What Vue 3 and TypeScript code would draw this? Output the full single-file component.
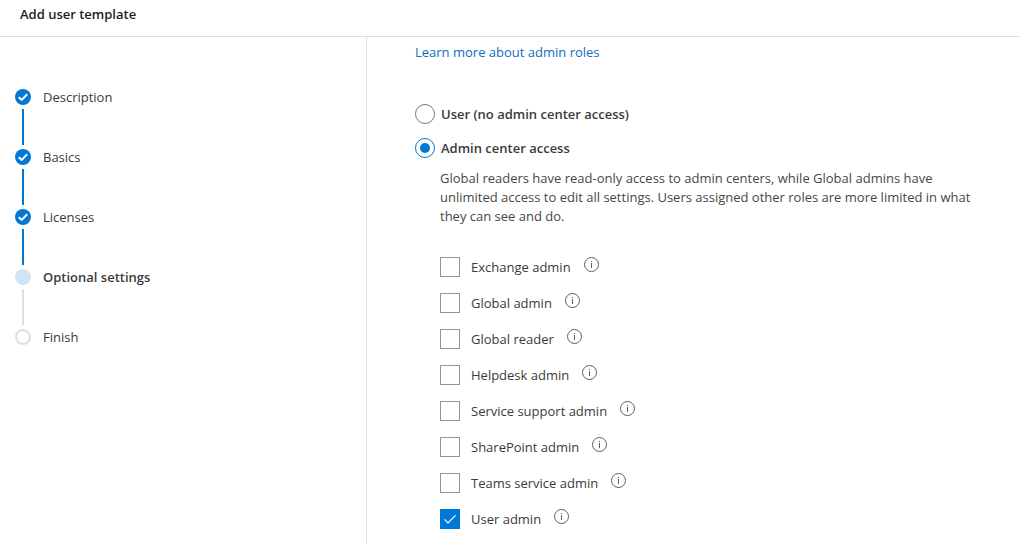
<script setup lang="ts">
import { ref } from 'vue'

type StepState = 'done' | 'current' | 'todo'

interface Step {
  label: string
  state: StepState
}

interface Role {
  id: string
  label: string
}

const steps: Step[] = [
  { label: 'Description', state: 'done' },
  { label: 'Basics', state: 'done' },
  { label: 'Licenses', state: 'done' },
  { label: 'Optional settings', state: 'current' },
  { label: 'Finish', state: 'todo' },
]

const roles: Role[] = [
  { id: 'exchange', label: 'Exchange admin' },
  { id: 'global-admin', label: 'Global admin' },
  { id: 'global-reader', label: 'Global reader' },
  { id: 'helpdesk', label: 'Helpdesk admin' },
  { id: 'service-support', label: 'Service support admin' },
  { id: 'sharepoint', label: 'SharePoint admin' },
  { id: 'teams', label: 'Teams service admin' },
  { id: 'user', label: 'User admin' },
]

const access = ref<'none' | 'admin'>('admin')
const selectedRoles = ref<string[]>(['user'])
</script>

<template>
  <div class="page">
    <header class="header">
      <h1 class="title">Add user template</h1>
    </header>

    <div class="body">
      <nav class="sidebar" aria-label="Progress">
        <ol class="steps">
          <li v-for="step in steps" :key="step.label" class="step" :class="step.state">
            <span class="marker">
              <svg v-if="step.state === 'done'" class="tick" viewBox="0 0 16 16" aria-hidden="true">
                <path d="M3.8 8.2 6.7 10.9 12.2 5.2" />
              </svg>
            </span>
            <span class="step-label">{{ step.label }}</span>
          </li>
        </ol>
      </nav>

      <main class="content">
        <a class="link" href="#">Learn more about admin roles</a>

        <div class="choices" role="radiogroup" aria-label="Admin center access">
          <div class="choice">
            <input id="access-none" v-model="access" class="radio" type="radio" name="access" value="none" />
            <label for="access-none">User (no admin center access)</label>
          </div>
          <div class="choice">
            <input id="access-admin" v-model="access" class="radio" type="radio" name="access" value="admin" />
            <label for="access-admin">Admin center access</label>
          </div>
        </div>

        <div class="details">
          <p class="hint">
            Global readers have read-only access to admin centers, while Global admins have
            unlimited access to edit all settings. Users assigned other roles are more limited in
            what they can see and do.
          </p>

          <ul class="roles">
            <li v-for="role in roles" :key="role.id" class="role">
              <span class="box">
                <input :id="role.id" v-model="selectedRoles" class="checkbox" type="checkbox" :value="role.id" />
                <svg class="check" viewBox="0 0 20 20" aria-hidden="true">
                  <path d="M4.5 10.3 8 13.8 15.5 6.3" />
                </svg>
              </span>
              <label :for="role.id">{{ role.label }}</label>
              <button class="info" type="button" :aria-label="`About ${role.label}`">
                <svg viewBox="0 0 15 15" aria-hidden="true">
                  <circle cx="7.5" cy="7.5" r="7" />
                  <path d="M7.5 6v5M7.5 4v1" />
                </svg>
              </button>
            </li>
          </ul>
        </div>
      </main>
    </div>
  </div>
</template>

<style>
body {
  margin: 0;
  background: #fff;
}
</style>

<style scoped>
.page {
  display: flex;
  flex-direction: column;
  min-height: 100vh;
  color: #3b3a39;
  font: 13px/20px 'Open Sans', 'Noto Sans', sans-serif;
}

.header {
  padding: 4px 20px 12px;
  border-bottom: 1px solid #e1dfdd;
}

.title {
  margin: 0;
  color: #201f1e;
  font-size: 13px;
  font-weight: 600;
  line-height: 20px;
}

.body {
  display: flex;
  flex: 1;
}

.sidebar {
  box-sizing: border-box;
  flex: 0 0 367px;
  padding: 50px 15px;
  border-right: 1px solid #e1dfdd;
}

.steps,
.roles {
  margin: 0;
  padding: 0;
  list-style: none;
}

.step {
  display: grid;
  grid-template-columns: 16px 1fr;
  grid-template-rows: 20px 36px;
  column-gap: 12px;
  row-gap: 2px;
  align-items: center;
  margin-bottom: 2px;
}

.step:not(:last-child)::after {
  content: '';
  justify-self: center;
  width: 2px;
  height: 36px;
  background: #0078d4;
}

.step.current::after {
  background: #e1dfdd;
}

.marker {
  box-sizing: border-box;
  width: 16px;
  height: 16px;
  border-radius: 50%;
  background: #0078d4;
}

.current .marker {
  background: #cfe4f7;
}

.todo .marker {
  border: 2px solid #e1dfdd;
  background: #fff;
}

.current .step-label {
  font-weight: 600;
}

.tick {
  display: block;
  fill: none;
  stroke: #fff;
  stroke-width: 2;
}

.content {
  flex: 1;
  min-width: 0;
  padding: 5px 32px 12px 48px;
}

.link {
  display: block;
  width: fit-content;
  color: #106ebe;
  text-decoration: none;
}

.choices {
  display: grid;
  gap: 14px;
  margin-top: 42px;
  font-weight: 600;
}

.choice {
  display: flex;
  align-items: center;
  gap: 6px;
}

.radio {
  box-sizing: border-box;
  display: grid;
  place-items: center;
  width: 20px;
  height: 20px;
  margin: 0;
  border: 1px solid #7a7876;
  border-radius: 50%;
  appearance: none;
}

.radio:checked {
  border-color: #0078d4;
}

.radio:checked::before {
  content: '';
  width: 10px;
  height: 10px;
  border-radius: 50%;
  background: #0078d4;
}

.details {
  margin: 11px 0 0 25px;
}

.hint {
  margin: 0;
  color: #484644;
  line-height: 19px;
}

.roles {
  display: grid;
  gap: 16px;
  margin-top: 31px;
}

.role {
  display: flex;
  align-items: center;
  height: 20px;
}

.box {
  display: grid;
  width: 20px;
  height: 20px;
  margin-right: 11px;
}

.checkbox,
.check {
  grid-area: 1 / 1;
}

.checkbox {
  box-sizing: border-box;
  width: 20px;
  height: 20px;
  margin: 0;
  border: 1px solid #979593;
  appearance: none;
}

.checkbox:checked {
  border-color: #0078d4;
  background: #0078d4;
}

.check {
  fill: none;
  stroke: #fff;
  stroke-width: 1.2;
  visibility: hidden;
  pointer-events: none;
}

.checkbox:checked + .check {
  visibility: visible;
}

.info {
  align-self: flex-start;
  width: 15px;
  height: 15px;
  margin-left: 13px;
  padding: 0;
  border: 0;
  background: none;
}

.info svg {
  display: block;
  fill: none;
  stroke: #605e5c;
}
</style>
